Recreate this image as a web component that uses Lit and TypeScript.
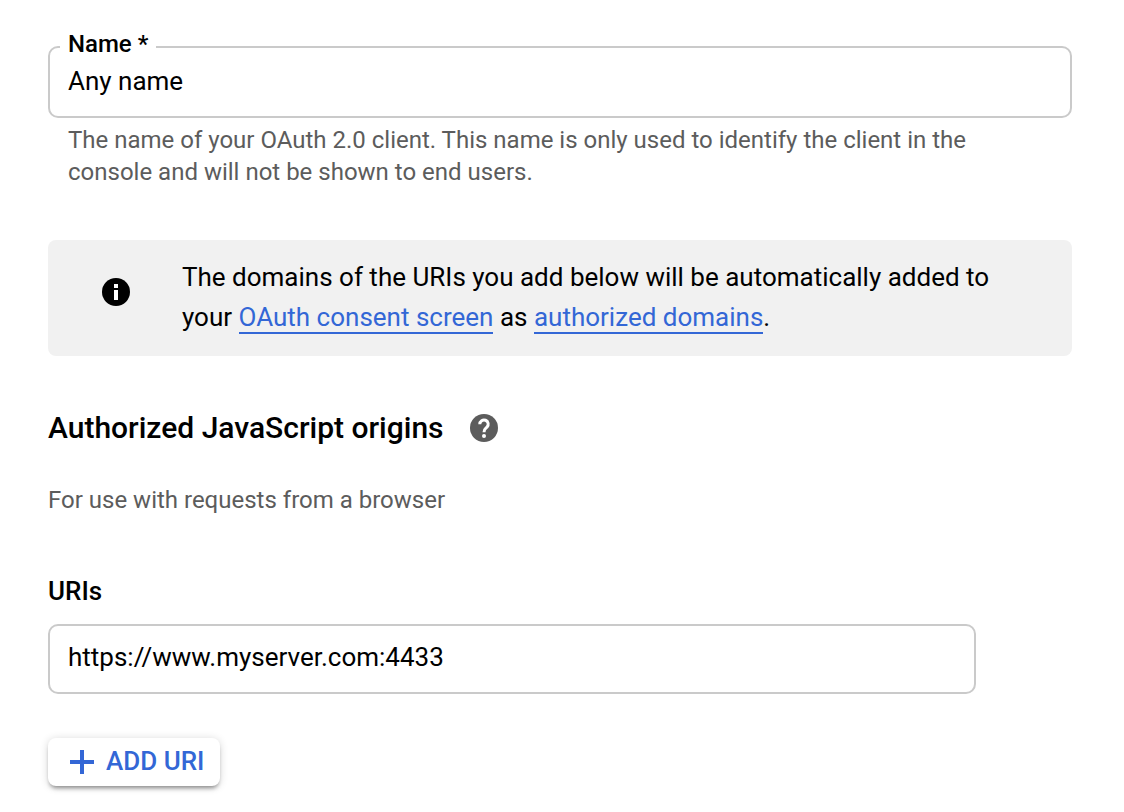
import { LitElement, html, css } from "lit";
import { customElement } from "lit/decorators.js";

@customElement("app-root")
class AppRoot extends LitElement {
  static styles = css`
    :host {
      display: block;
      box-sizing: border-box;
      padding: 32px 52px 24px 48px;
      background: #fff;
      color: #000;
      font: 400 26px/40px Roboto, sans-serif;
    }
    * { box-sizing: border-box; }
    .field {
      margin: 0;
      padding: 0 0 0 10px;
      border: 2px solid #cacaca;
      border-radius: 10px;
      min-width: 0;
    }
    legend { padding: 0 8px 6px; font-size: 24px; line-height: 24px; font-weight: 500; }
    legend label { display: block; }
    input {
      display: block;
      width: 100%;
      border: 0;
      outline: 0;
      background: transparent;
      color: inherit;
      font: inherit;
    }
    .name { height: 38px; padding: 0 8px; margin: 0 0 16px; }
    .hint { margin: 6px 0 0; padding: 0 20px; font-size: 24px; line-height: 32px; color: #5c5c5c; }
    .notice {
      display: flex;
      gap: 52px;
      margin-top: 52px;
      padding: 17px 54px 19px;
      border-radius: 8px;
      background: #f1f1f1;
    }
    .notice p { margin: 0; }
    .notice svg { margin-top: 21px; }
    svg { flex: none; display: block; }
    a { color: #3367d6; text-decoration: none; border-bottom: 2px solid #3367d6; }
    .heading { display: flex; align-items: center; gap: 26px; margin-top: 52px; }
    h2 { margin: 0; font-size: 30px; line-height: 40px; font-weight: 500; }
    .sub { margin: 36px 0 0; font-size: 24px; line-height: 32px; color: #5c5c5c; }
    .uris { display: block; margin-top: 55px; font-weight: 500; }
    .uri {
      width: calc(100% - 96px);
      height: 70px;
      margin-top: 13px;
      padding: 0 18px 4px;
      border: 2px solid #cacaca;
      border-radius: 10px;
    }
    .help, .add { border: 0; background: none; padding: 0; font: inherit; }
    .add {
      display: flex;
      align-items: center;
      gap: 12px;
      height: 48px;
      margin-top: 44px;
      padding: 0 16px 0 22px;
      border-radius: 8px;
      background: #fff;
      color: #3367d6;
      font-weight: 500;
      box-shadow: 0 4px 4px -2px rgba(0, 0, 0, 0.4), 0 1px 8px rgba(0, 0, 0, 0.16);
    }
    .add span { padding-bottom: 2px; }
  `;

  render() {
    return html`
      <fieldset class="field">
        <legend><label for="name">Name *</label></legend>
        <input class="name" id="name" value="Any name" aria-describedby="hint" />
      </fieldset>
      <p class="hint" id="hint">
        The name of your OAuth 2.0 client. This name is only used to identify the client in the
        console and will not be shown to end users.
      </p>
      <div class="notice">
        <svg width="28" height="28" viewBox="0 0 28 28" aria-hidden="true">
          <circle cx="14" cy="14" r="14" />
          <path fill="#fff" d="M12 6h4v4h-4zM12 12h4v10h-4z" />
        </svg>
        <p>
          The domains of the URIs you add below will be automatically added to your
          <a href="#consent">OAuth consent screen</a> as <a href="#domains">authorized domains</a>.
        </p>
      </div>
      <div class="heading">
        <h2>Authorized JavaScript origins</h2>
        <button class="help" aria-label="Help">
          <svg width="28" height="28" viewBox="0 0 28 28">
            <circle cx="14" cy="14" r="14" fill="#5c5c5c" />
            <path d="M9.8 10.2a4.2 4.2 0 1 1 7.2 2.9c-1.6 1.5-3 2.2-3 5.1" fill="none" stroke="#fff" stroke-width="3" />
            <circle cx="14" cy="22" r="2" fill="#fff" />
          </svg>
        </button>
      </div>
      <p class="sub">For use with requests from a browser</p>
      <label class="uris" for="uri">URIs</label>
      <input class="uri" id="uri" value="https://www.myserver.com:4433" />
      <button class="add">
        <svg width="24" height="24" viewBox="0 0 24 24" fill="#3367d6" aria-hidden="true">
          <path d="M10 0h4v10h10v4H14v10h-4V14H0v-4h10z" />
        </svg>
        <span>ADD URI</span>
      </button>
    `;
  }
}
